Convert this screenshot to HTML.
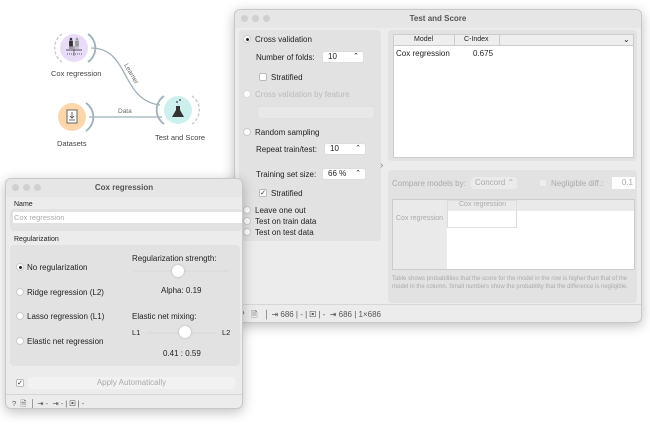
<!DOCTYPE html>
<html><head><style>
*{box-sizing:border-box;margin:0;padding:0}
body{width:650px;height:434px;background:#fff;font-family:"Liberation Sans",sans-serif;position:relative;overflow:hidden;color:#222}
.abs{position:absolute}
.t{position:absolute;font-size:8px;white-space:nowrap}
.win{position:absolute;background:#ececec;border:1px solid #c8c8c8;border-radius:6px;box-shadow:0 3px 12px rgba(0,0,0,.25);overflow:hidden}
.tb{position:absolute;left:0;right:0;top:0;height:18px;text-align:center;font-size:8px;font-weight:bold;color:#555;line-height:17px;background:#e6e6e6}
.dot{position:absolute;top:5px;width:7px;height:7px;border-radius:50%;background:#d0d0d0}
.rad{position:absolute;width:8px;height:8px;border-radius:50%;background:#fff;border:1px solid #ccc}
.rad.on::after{content:"";position:absolute;left:2px;top:2px;width:3px;height:3px;border-radius:50%;background:#222}
.cb{position:absolute;width:8px;height:8px;border-radius:2px;background:#fff;border:1px solid #bbb;font-size:7px;line-height:7px;text-align:center}
.spin{position:absolute;height:12px;background:#fff;border:1px solid #ddd;border-radius:3px;font-size:8px;line-height:10px;padding-left:5px}
.spin::after{content:"⌃";position:absolute;right:4px;top:0;font-size:7px}
.panel{position:absolute;background:#e2e2e2;border-radius:4px}
.g{color:#aaa}
</style></head><body>

<svg class="abs" style="left:0;top:0" width="240" height="180">
<path d="M91 48 C130 48,120 100,160 105" stroke="#9fb0ba" stroke-width="1.3" fill="none"/>
<path d="M89 117 L162 117" stroke="#9fb0ba" stroke-width="1.3" fill="none"/>
<circle cx="74" cy="48" r="14" fill="#e9dcf9"/>
<path d="M62 34 A17 17 0 0 0 62 62" stroke="#ccc" stroke-width="1.5" stroke-dasharray="3 2" fill="none"/>
<path d="M88 34 A17 17 0 0 1 88 62" stroke="#9fb0ba" stroke-width="1.8" fill="none"/>
<circle cx="71" cy="39" r="1.3" fill="#333"/><path d="M69.5 41 h3 v5 h-3z M70 46 v3 M72 46 v3" stroke="#333" stroke-width=".8" fill="#333"/>
<circle cx="77" cy="39" r="1.3" fill="#999"/><path d="M75.5 41 h3 v5 h-3z M76 46 v3 M78 46 v3" stroke="#999" stroke-width=".8" fill="#999"/>
<line x1="66" y1="50" x2="82" y2="50" stroke="#333" stroke-width=".8"/>
<line x1="74" y1="46" x2="74" y2="56" stroke="#333" stroke-width=".6"/>
<line x1="67" y1="54" x2="82" y2="54" stroke="#333" stroke-width=".8" stroke-dasharray="1 1"/>
<circle cx="72" cy="117" r="14" fill="#fcd7ac"/>
<rect x="67" y="110" width="10" height="13" fill="#fff" stroke="#444" stroke-width=".8"/>
<path d="M72 112 v6 M70 116 l2 2 2-2 M69 120 h6" stroke="#444" stroke-width=".8" fill="none"/>
<path d="M86 103 A17 17 0 0 1 86 131" stroke="#9fb0ba" stroke-width="1.8" fill="none"/>
<circle cx="178" cy="110" r="14" fill="#cdf0ef"/>
<path d="M164 96 A17 17 0 0 0 164 124" stroke="#9fb0ba" stroke-width="1.8" fill="none"/>
<path d="M192 96 A17 17 0 0 1 192 124" stroke="#ccc" stroke-width="1.5" stroke-dasharray="3 2" fill="none"/>
<path d="M176 106 v4 l-4 7 h12 l-4-7 v-4z" fill="#333"/>
<circle cx="177" cy="102" r=".9" fill="#333"/><circle cx="180" cy="100" r=".9" fill="#333"/>
<text x="118" y="113" font-size="6.5" fill="#666">Data</text>
<text x="124" y="65" font-size="6.5" fill="#666" transform="rotate(60 124 65)">Learner</text>
<text x="51" y="76" font-size="7.5" fill="#444">Cox regression</text>
<text x="57" y="146" font-size="7.5" fill="#444">Datasets</text>
<text x="155" y="140" font-size="7.5" fill="#444">Test and Score</text>
</svg>

<!-- Test and Score -->
<div class="win" style="left:234px;top:9px;width:408px;height:314px">
<div class="tb">Test and Score</div>
<div class="dot" style="left:6px"></div><div class="dot" style="left:17px"></div><div class="dot" style="left:28px"></div>
<div class="panel" style="left:4px;top:20px;width:142px;height:211px"></div>
<div class="rad on" style="left:8px;top:25px"></div><div class="t" style="left:20px;top:25px">Cross validation</div>
<div class="t" style="left:21px;top:43px">Number of folds:</div><div class="spin" style="left:87px;top:41px;width:42px">10</div>
<div class="cb" style="left:24px;top:63px"></div><div class="t" style="left:36px;top:63px">Stratified</div>
<div class="rad" style="left:8px;top:80px;border-color:#ddd"></div><div class="t g" style="left:20px;top:80px;color:#bbb">Cross validation by feature</div>
<div class="abs" style="left:22px;top:96px;width:118px;height:13px;background:#e8e8e8;border-radius:3px;border:1px solid #e0e0e0"></div>
<div class="rad" style="left:8px;top:118px"></div><div class="t" style="left:20px;top:118px">Random sampling</div>
<div class="t" style="left:21px;top:135px">Repeat train/test:</div><div class="spin" style="left:89px;top:133px;width:42px">10</div>
<div class="t" style="left:21px;top:160px">Training set size:</div><div class="spin" style="left:87px;top:158px;width:44px">66 %</div>
<div class="cb" style="left:24px;top:179px">✓</div><div class="t" style="left:36px;top:179px">Stratified</div>
<div class="rad" style="left:8px;top:196px"></div><div class="t" style="left:20px;top:196px">Leave one out</div>
<div class="rad" style="left:8px;top:207px"></div><div class="t" style="left:20px;top:207px">Test on train data</div>
<div class="rad" style="left:8px;top:218px"></div><div class="t" style="left:20px;top:218px">Test on test data</div>
<div class="t" style="left:145px;top:150px;font-size:10px;color:#888">›</div>
<div class="panel" style="left:153px;top:20px;width:249px;height:131px"></div>
<div class="abs" style="left:158px;top:24px;width:241px;height:124px;background:#fff;border:1px solid #ccc"></div>
<div class="abs" style="left:158px;top:24px;width:241px;height:12px;background:#eee;border:1px solid #ccc"></div>
<div class="t" style="left:179px;top:26px;font-size:7px">Model</div>
<div class="abs" style="left:219px;top:25px;width:1px;height:10px;background:#ccc"></div>
<div class="t" style="left:229px;top:26px;font-size:7px">C-Index</div>
<div class="abs" style="left:264px;top:25px;width:1px;height:10px;background:#ccc"></div>
<div class="t" style="left:388px;top:25px;font-size:8px">⌄</div>
<div class="t" style="left:161px;top:39px">Cox regression</div><div class="t" style="left:238px;top:39px">0.675</div>
<div class="panel" style="left:153px;top:160px;width:249px;height:133px"></div>
<div class="t g" style="left:157px;top:169px">Compare models by:</div>
<div class="abs" style="left:236px;top:167px;width:46px;height:12px;background:#ebebeb;border-radius:3px;font-size:8px;color:#aaa;padding-left:4px;line-height:12px">Concord ⌃</div>
<div class="cb" style="left:304px;top:169px;border-color:#e0e0e0;background:#eee"></div>
<div class="t g" style="left:316px;top:169px">Negligible diff.:</div>
<div class="abs" style="left:377px;top:167px;width:23px;height:12px;background:#fff;font-size:8px;color:#aaa;text-align:right;padding-right:2px;line-height:12px">0.1</div>
<div class="abs" style="left:157px;top:189px;width:243px;height:71px;background:#fff;border:1px solid #ccc"></div>
<div class="abs" style="left:158px;top:190px;width:241px;height:11px;background:#eaeaea"></div>
<div class="abs" style="left:158px;top:190px;width:54px;height:69px;background:#eaeaea"></div>
<div class="abs" style="left:212px;top:190px;width:70px;height:28px;border:1px solid #ddd"></div>
<div class="t g" style="left:224px;top:191px;font-size:7px">Cox regression</div>
<div class="t g" style="left:161px;top:205px;font-size:7px">Cox regression</div>
<div class="t g" style="left:157px;top:265px;font-size:6px;line-height:8px;white-space:normal;width:245px">Table shows probabilities that the score for the model in the row is higher than that of the model in the column. Small numbers show the probability that the difference is negligible.</div>
<div class="abs" style="left:0;top:294px;width:408px;height:1px;background:#d6d6d6"></div>
<div class="t" style="left:5px;top:299px;color:#555">?&nbsp;&nbsp;&nbsp;🗎&nbsp;&nbsp;&nbsp;│&nbsp;⇥ 686 | - | ▣ | - &nbsp;⇥ 686 | 1×686</div>
</div>

<!-- Cox regression -->
<div class="win" style="left:5px;top:178px;width:238px;height:231px">
<div class="tb">Cox regression</div>
<div class="dot" style="left:6px"></div><div class="dot" style="left:17px"></div><div class="dot" style="left:28px"></div>
<div class="t" style="left:8px;top:22px;font-size:7px">Name</div>
<div class="panel" style="left:4px;top:30px;width:232px;height:22px"></div>
<div class="abs" style="left:7px;top:33px;width:231px;height:11px;background:#fff;font-size:7.5px;color:#aaa;padding-left:1px;line-height:11px">Cox regression</div>
<div class="t" style="left:8px;top:57px;font-size:7px">Regularization</div>
<div class="panel" style="left:4px;top:66px;width:230px;height:121px"></div>
<div class="rad on" style="left:10px;top:84px"></div><div class="t" style="left:21px;top:84px">No regularization</div>
<div class="rad" style="left:10px;top:109px"></div><div class="t" style="left:21px;top:109px">Ridge regression (L2)</div>
<div class="rad" style="left:10px;top:133px"></div><div class="t" style="left:21px;top:133px">Lasso regression (L1)</div>
<div class="rad" style="left:10px;top:158px"></div><div class="t" style="left:21px;top:158px">Elastic net regression</div>
<div class="t" style="left:126px;top:75px">Regularization strength:</div>
<div class="abs" style="left:128px;top:91px;width:96px;height:2px;background:#ddd"></div>
<div class="abs" style="left:166px;top:86px;width:12px;height:12px;border-radius:50%;background:#fff;box-shadow:0 0 2px #aaa"></div>
<div class="t" style="left:155px;top:107px">Alpha: 0.19</div>
<div class="t" style="left:126px;top:133px">Elastic net mixing:</div>
<div class="t" style="left:126px;top:149px;font-size:7.5px">L1</div><div class="t" style="left:216px;top:149px;font-size:7.5px">L2</div>
<div class="abs" style="left:140px;top:153px;width:70px;height:2px;background:#ddd"></div>
<div class="abs" style="left:173px;top:147px;width:12px;height:12px;border-radius:50%;background:#fff;box-shadow:0 0 2px #aaa"></div>
<div class="t" style="left:157px;top:170px">0.41 : 0.59</div>
<div class="cb" style="left:10px;top:200px">✓</div>
<div class="abs" style="left:22px;top:198px;width:207px;height:12px;background:#f2f2f2;border-radius:3px;font-size:8px;color:#aaa;text-align:center;line-height:12px">Apply Automatically</div>
<div class="abs" style="left:0;top:215px;width:238px;height:1px;background:#d6d6d6"></div>
<div class="t" style="left:6px;top:219px;color:#555;font-size:7.5px">?&nbsp;&nbsp;🗎&nbsp;&nbsp;│ ⇥ - &nbsp;⇥ - | ▣ | -</div>
</div>
</body></html>
